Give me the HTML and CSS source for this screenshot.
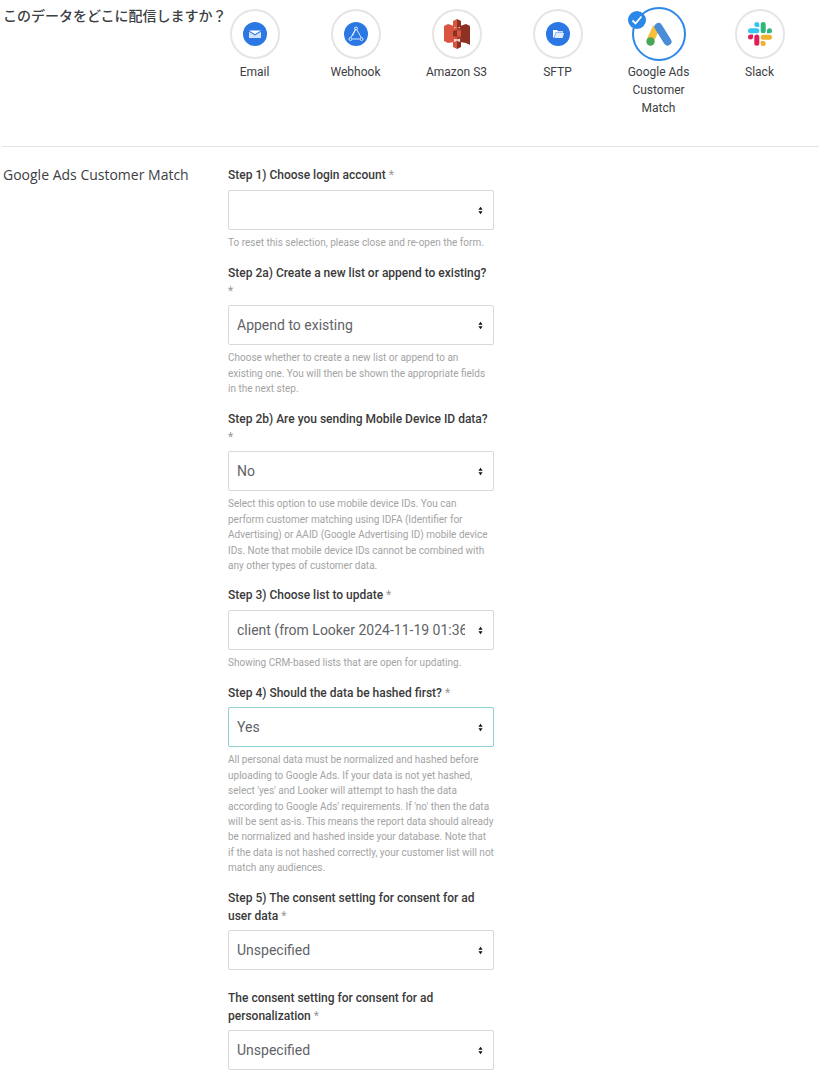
FILE: index.html
```html
<!DOCTYPE html>
<html lang="ja">
<head>
  <meta charset="UTF-8">
  <title>Schedule delivery</title>
  <link rel="stylesheet" href="styles.css">
</head>
<body>
  <section class="destinations">
    <h2 class="destinations-title">このデータをどこに配信しますか？</h2>
    <ul class="dest-list">
      <li class="dest">
        <span class="dest-ring">
          <svg class="dest-icon" viewBox="0 0 24 24">
            <circle cx="12" cy="12" r="12" fill="#2b78e4"/>
            <path d="M6 8.500h12l-6 3.800z" fill="#fff"/>
            <path d="M6 9.800l6 3.800 6-3.800v6.200H6z" fill="#fff" opacity=".8"/>
          </svg>
        </span>
        <span class="dest-name">Email</span>
      </li>
      <li class="dest">
        <span class="dest-ring">
          <svg class="dest-icon" viewBox="0 0 24 24">
            <circle cx="12" cy="12" r="12" fill="#2b78e4"/>
            <path d="M11 8L6.800 15.500M13 8l4.200 7.500M8.500 17h7M12 6.500L8.500 14" fill="none" stroke="#fff" stroke-width=".8"/>
            <circle cx="12" cy="6.500" r="1.500" fill="none" stroke="#fff" stroke-width=".8"/>
            <circle cx="6.500" cy="17" r="1.500" fill="none" stroke="#fff" stroke-width=".8"/>
            <circle cx="17.500" cy="17" r="1.500" fill="none" stroke="#fff" stroke-width=".8"/>
          </svg>
        </span>
        <span class="dest-name">Webhook</span>
      </li>
      <li class="dest">
        <span class="dest-ring">
          <svg class="dest-icon dest-icon-s3" viewBox="0 0 26 30">
            <path d="M0 7l4-2v19l-4-2z" fill="#d9553f"/>
            <path d="M26 7l-4-2v19l4 2z" fill="#8c3123"/>
            <path d="M4 5l6 2v16l-6 1z" fill="#d9553f"/>
            <path d="M22 5l-6 2v16l6 1z" fill="#8c3123"/>
            <path d="M13 0l-4 2v6l4 1z" fill="#d9553f"/>
            <path d="M13 0l4 2v6l-4 1z" fill="#8c3123"/>
            <path d="M9 9h4v11H9z" fill="#d9553f"/>
            <path d="M13 9h4v11h-4z" fill="#a8402f"/>
            <path d="M9 12l4-1v7l-4-1z" fill="#8c3123"/>
            <path d="M17 12l-4-1v7l4-1z" fill="#d9553f"/>
            <path d="M13 22l-4 1v5l4 2z" fill="#d9553f"/>
            <path d="M13 22l4 1v5l-4 2z" fill="#8c3123"/>
            <path d="M9 21l4-1 4 1-4 1z" fill="#f0a79a"/>
          </svg>
        </span>
        <span class="dest-name">Amazon S3</span>
      </li>
      <li class="dest">
        <span class="dest-ring">
          <svg class="dest-icon" viewBox="0 0 24 24">
            <circle cx="12" cy="12" r="12" fill="#2b78e4"/>
            <path d="M7 8h4l1.200 1.200H17v1.300H9.500L8 15.500H7z" fill="#fff"/>
            <path d="M9.800 11H18l-1.400 5H8.400z" fill="#fff" opacity=".85"/>
          </svg>
        </span>
        <span class="dest-name">SFTP</span>
      </li>
      <li class="dest dest-selected">
        <span class="dest-ring">
          <svg class="dest-icon dest-icon-ads" viewBox="0 0 26 24">
            <path d="M10.500 5L4.500 18" stroke="#f7bf3a" stroke-width="7.500" fill="none"/>
            <path d="M12.500 5l9 14.500" stroke="#4a8cd8" stroke-width="8" stroke-linecap="round" fill="none"/>
            <circle cx="4.500" cy="19.500" r="4.200" fill="#46a857"/>
          </svg>
        </span>
        <span class="dest-check">
          <svg viewBox="0 0 18 18"><path d="M4.500 9.500l3 3 6-7" fill="none" stroke="#fff" stroke-width="1.800"/></svg>
        </span>
        <span class="dest-name">Google Ads Customer Match</span>
      </li>
      <li class="dest">
        <span class="dest-ring">
          <svg class="dest-icon dest-icon-slack" viewBox="0 0 24 24">
            <path d="M5 15a2.500 2.500 0 1 1-2.500-2.500H5zM6.300 15a2.500 2.500 0 0 1 5 0v6.300a2.500 2.500 0 0 1-5 0z" fill="#e01e5a"/>
            <path d="M8.800 5a2.500 2.500 0 1 1 2.500-2.500V5zM8.800 6.300a2.500 2.500 0 0 1 0 5H2.500a2.500 2.500 0 0 1 0-5z" fill="#36c5f0"/>
            <path d="M19 8.800a2.500 2.500 0 1 1 2.500 2.500H19zM17.700 8.800a2.500 2.500 0 0 1-5 0V2.500a2.500 2.500 0 0 1 5 0z" fill="#2eb67d"/>
            <path d="M15.200 19a2.500 2.500 0 1 1-2.500 2.500V19zM15.200 17.700a2.500 2.500 0 0 1 0-5h6.300a2.500 2.500 0 0 1 0 5z" fill="#ecb22e"/>
          </svg>
        </span>
        <span class="dest-name">Slack</span>
      </li>
    </ul>
  </section>

  <section class="settings">
    <h3 class="settings-title">Google Ads Customer Match</h3>
    <form class="settings-form">
      <div class="field">
        <label class="field-label">Step 1) Choose login account <span class="req">*</span></label>
        <div class="select-wrap">
          <select class="select"><option></option></select>
          <svg class="select-arrows" viewBox="0 0 6 9"><path d="M3 0l2.500 3.500h-5zM3 9L.5 5.500h5z"/></svg>
        </div>
        <p class="field-help">To reset this selection, please close and re-open the form.</p>
      </div>
      <div class="field">
        <label class="field-label">Step 2a) Create a new list or append to existing? <span class="req">*</span></label>
        <div class="select-wrap">
          <select class="select"><option>Append to existing</option></select>
          <svg class="select-arrows" viewBox="0 0 6 9"><path d="M3 0l2.500 3.500h-5zM3 9L.5 5.500h5z"/></svg>
        </div>
        <p class="field-help">Choose whether to create a new list or append to an existing one. You will then be shown the appropriate fields in the next step.</p>
      </div>
      <div class="field">
        <label class="field-label">Step 2b) Are you sending Mobile Device ID data? <span class="req">*</span></label>
        <div class="select-wrap">
          <select class="select"><option>No</option></select>
          <svg class="select-arrows" viewBox="0 0 6 9"><path d="M3 0l2.500 3.500h-5zM3 9L.5 5.500h5z"/></svg>
        </div>
        <p class="field-help">Select this option to use mobile device IDs. You can perform customer matching using IDFA (Identifier for Advertising) or AAID (Google Advertising ID) mobile device IDs. Note that mobile device IDs cannot be combined with any other types of customer data.</p>
      </div>
      <div class="field">
        <label class="field-label">Step 3) Choose list to update <span class="req">*</span></label>
        <div class="select-wrap">
          <select class="select"><option>client (from Looker 2024-11-19 01:36:12)</option></select>
          <svg class="select-arrows" viewBox="0 0 6 9"><path d="M3 0l2.500 3.500h-5zM3 9L.5 5.500h5z"/></svg>
        </div>
        <p class="field-help">Showing CRM-based lists that are open for updating.</p>
      </div>
      <div class="field">
        <label class="field-label">Step 4) Should the data be hashed first? <span class="req">*</span></label>
        <div class="select-wrap">
          <select class="select select-focus"><option>Yes</option></select>
          <svg class="select-arrows" viewBox="0 0 6 9"><path d="M3 0l2.500 3.500h-5zM3 9L.5 5.500h5z"/></svg>
        </div>
        <p class="field-help">All personal data must be normalized and hashed before uploading to Google Ads. If your data is not yet hashed, select 'yes' and Looker will attempt to hash the data according to Google Ads' requirements. If 'no' then the data will be sent as-is. This means the report data should already be normalized and hashed inside your database. Note that if the data is not hashed correctly, your customer list will not match any audiences.</p>
      </div>
      <div class="field">
        <label class="field-label">Step 5) The consent setting for consent for ad user data <span class="req">*</span></label>
        <div class="select-wrap">
          <select class="select"><option>Unspecified</option></select>
          <svg class="select-arrows" viewBox="0 0 6 9"><path d="M3 0l2.500 3.500h-5zM3 9L.5 5.500h5z"/></svg>
        </div>
      </div>
      <div class="field field-spaced">
        <label class="field-label">The consent setting for consent for ad personalization <span class="req">*</span></label>
        <div class="select-wrap">
          <select class="select"><option>Unspecified</option></select>
          <svg class="select-arrows" viewBox="0 0 6 9"><path d="M3 0l2.500 3.500h-5zM3 9L.5 5.500h5z"/></svg>
        </div>
      </div>
    </form>
  </section>
</body>
</html>
```

FILE: styles.css
```css
* {
  box-sizing: border-box;
}
body {
  margin: 0;
  font-family: Roboto, "Noto Sans CJK JP", sans-serif;
  color: #3c4043;
  background-color: #fff;
}
.destinations {
  display: flex;
  height: 147px;
  border-bottom: 1px solid #e4e4e4;
  margin-left: 2px;
}
.destinations-title {
  width: 201px;
  margin: 7px 0 0 1px;
  flex: none;
  font-size: 14px;
  font-weight: 500;
  line-height: 18px;
  white-space: nowrap;
}
.dest-list {
  display: flex;
  list-style: none;
  margin: 0;
  padding: 9px 0 0;
}
.dest {
  position: relative;
  width: 101px;
  display: flex;
  flex-direction: column;
  align-items: center;
  text-align: center;
}
.dest-ring {
  width: 50px;
  height: 50px;
  border: 2px solid #e5e5e5;
  border-radius: 50%;
  display: flex;
  align-items: center;
  justify-content: center;
}
.dest-icon {
  width: 24px;
  height: 24px;
}
.dest-icon-s3 {
  width: 26px;
  height: 30px;
}
.dest-icon-ads {
  width: 26px;
  height: 24px;
}
.dest-name {
  width: 72px;
  margin-top: 4px;
  font-size: 12px;
  line-height: 18px;
}
.dest-selected .dest-ring {
  width: 54px;
  height: 54px;
  margin-top: -2px;
  margin-bottom: -2px;
  border-color: #2b88e9;
}
.dest-check {
  position: absolute;
  top: 2px;
  left: 20px;
  width: 18px;
  height: 18px;
  border-radius: 50%;
  background-color: #2b88e9;
}
.dest-check svg {
  display: block;
}
.settings {
  display: flex;
  padding: 19.4px 0 0 3px;
}
.settings-title {
  width: 225px;
  flex: none;
  margin: 0;
  font-family: "Open Sans", Roboto, sans-serif;
  font-size: 14px;
  font-weight: 400;
  line-height: 18px;
}
.settings-form {
  width: 266px;
}
.field {
  margin-bottom: 13px;
}
.field-spaced {
  margin-top: 18.2px;
}
.field-label {
  display: block;
  margin-bottom: 5.8px;
  font-size: 12px;
  font-weight: 500;
  line-height: 18px;
  color: #3a3a3a;
}
.req {
  color: #999;
  font-weight: 400;
}
.select-wrap {
  position: relative;
}
.select {
  display: block;
  width: 100%;
  height: 40px;
  padding: 0 28px 0 8px;
  border: 1px solid #d9d9d9;
  border-radius: 2px;
  background-color: #fff;
  appearance: none;
  font-family: Roboto, sans-serif;
  font-size: 14px;
  color: #5f6368;
}
.select-focus {
  border-color: #8fd0d6;
}
.select-arrows {
  position: absolute;
  top: 16px;
  right: 11px;
  width: 5px;
  height: 9px;
  fill: #111;
}
.field-help {
  margin: 5px 0 0;
  font-size: 10px;
  line-height: 15.4px;
  color: #a3a3a3;
}
```
